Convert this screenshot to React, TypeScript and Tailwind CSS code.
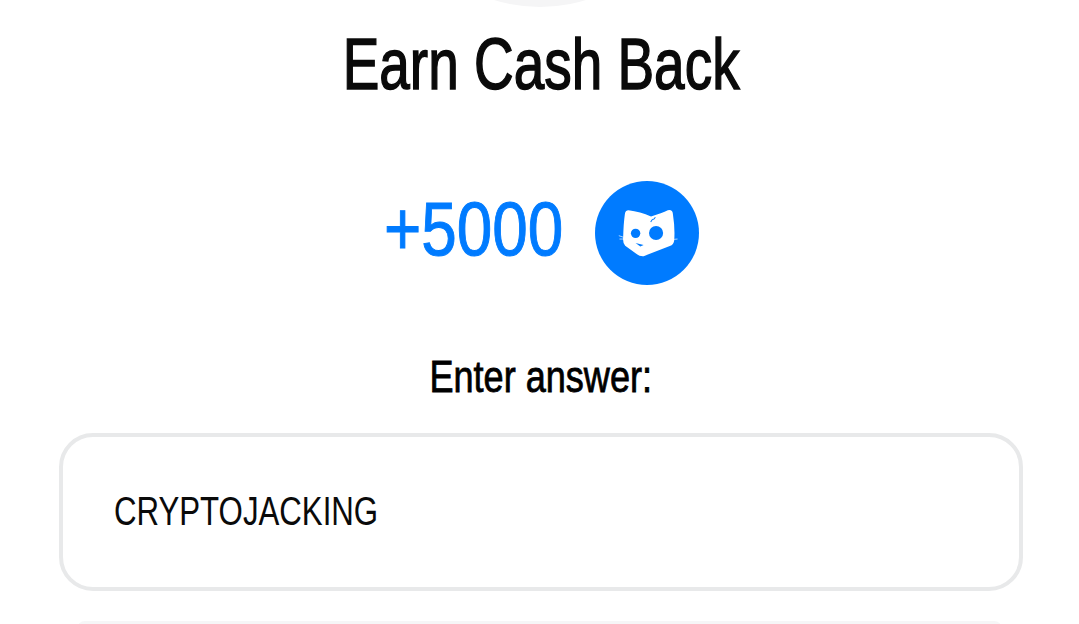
export default function App() {
  const hand = { fontFamily: '"Liberation Sans", sans-serif' };
  return (
    <div className="h-[624px] w-[1079px] overflow-hidden bg-white flex flex-col items-center text-black" style={hand}>
      <div className="-mt-[303px] h-[310px] w-[310px] shrink-0 rounded-full bg-[#f5f5f6]" />
      <div className="mt-[21px] ml-[3px] flex h-[72px] w-[396px] justify-center whitespace-nowrap">
        <h1 className="shrink-0 scale-x-[0.763] text-[72px] leading-[72px] font-normal text-[#0a0a0a] [-webkit-text-stroke:1.5px_#0a0a0a]">Earn Cash Back</h1>
      </div>
      <div className="mt-[81px] flex h-[104px] items-center gap-[32px] pl-[5px]">
        <div className="flex w-[177px] justify-center whitespace-nowrap pb-[8px]">
          <span className="shrink-0 scale-x-[0.84] text-[76px] leading-none text-[#007bff] [-webkit-text-stroke:1px_#007bff]">+5000</span>
        </div>
        <div className="flex h-[104px] w-[104px] items-center justify-center rounded-full bg-[#007bff]">
          <svg viewBox="45 33 310 310" className="h-[104px] w-[104px]">
            <path d="M145 120 Q180 124 212 139 Q245 128 262 120 Q276 117 277 130 Q284 175 281 210 Q280 222 268 227 L190 257 Q178 258 168 250 L135 226 Q127 218 129 200 Q130 160 134 132 Q135 120 145 120Z" fill="#fff" />
            <circle cx="166" cy="189" r="14" fill="#007bff" />
            <circle cx="227" cy="188" r="21" fill="#007bff" />
            <path d="M166 218 L190 224 L180 228Z" fill="#007bff" />
            <path d="M211 155 L217 146 M219 148 L225 141" stroke="#007bff" strokeWidth="3" fill="none" />
            <path d="M116 196 L131 201 M118 206 L131 206 M279 207 L291 206" stroke="#fff" strokeWidth="2" fill="none" />
          </svg>
        </div>
      </div>
      <div className="mt-[65px] ml-[3px] flex h-[54px] w-[221px] justify-center whitespace-nowrap">
        <p className="shrink-0 scale-x-[0.82] text-[44px] leading-[54px] [-webkit-text-stroke:0.8px_#000]">Enter answer:</p>
      </div>
      <div className="mt-[29px] ml-[2px] h-[158px] w-[964px] shrink-0 rounded-[34px] border-4 border-[#e8e9ea] bg-white flex items-center pl-[51px] pb-[2px]">
        <span className="origin-left scale-x-[0.78] whitespace-nowrap text-[40px] leading-none text-[#0a0a0a]">CRYPTOJACKING</span>
      </div>
      <div className="mt-[30px] h-[10px] w-[925px] shrink-0 rounded-t-[8px] bg-[#f6f6f7]" />
    </div>
  );
}
